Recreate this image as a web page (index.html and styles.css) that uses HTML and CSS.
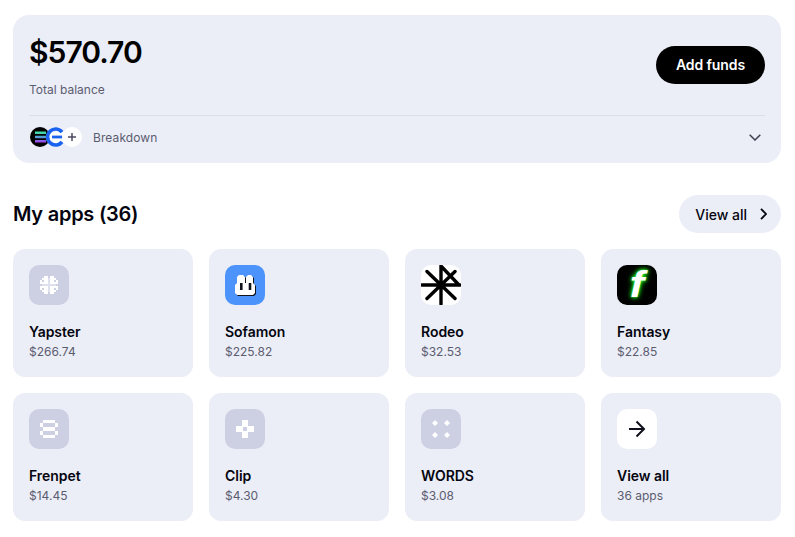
FILE: index.html
```html
<!DOCTYPE html>
<html lang="en">
<head>
  <meta charset="UTF-8" />
  <title>Wallet</title>
  <link rel="stylesheet" href="styles.css">
</head>
<body>

<section class="balance-card">
  <div class="balance-top">
    <div>
      <div class="balance-amount">$570.70</div>
      <div class="balance-label">Total balance</div>
    </div>
    <a class="add-funds">Add funds</a>
  </div>
  <div class="breakdown">
    <div class="coins">
      <svg class="coin" viewBox="0 0 20 20">
        <defs>
          <linearGradient id="sol" x1="0" y1="0" x2="0" y2="1">
            <stop offset="0" stop-color="#3fe6a0"/>
            <stop offset="0.5" stop-color="#4f9fd8"/>
            <stop offset="1" stop-color="#a53fee"/>
          </linearGradient>
        </defs>
        <circle cx="10" cy="10" r="10" fill="#000"/>
        <path d="M5 4.5h11v2.6H5zM5 8.7h11v2.6H5zM5 12.9h11v2.6H5z" fill="url(#sol)"/>
      </svg>
      <svg class="coin" viewBox="0 0 20 20">
        <circle cx="10" cy="10" r="10" fill="#fff"/>
        <path d="M16 5.2A8 8 0 1 0 16 14.8" fill="none" stroke="#1a63f0" stroke-width="3.6"/>
        <rect x="6" y="8.6" width="10" height="2.8" fill="#1a63f0"/>
      </svg>
      <svg class="coin" viewBox="0 0 20 20">
        <circle cx="10" cy="10" r="10" fill="#fff"/>
        <path d="M10 6V14M6 10H14" stroke="#4b4b5e" stroke-width="1.5"/>
      </svg>
    </div>
    <span class="breakdown-label">Breakdown</span>
    <svg class="chevron-down" viewBox="0 0 12 7"><path d="M.7 .7L6 6L11.3 .7" fill="none" stroke="#3f3f52" stroke-width="1.5"/></svg>
  </div>
</section>

<div class="apps-head">
  <h2>My apps (36)</h2>
  <a class="view-all">View all
    <svg viewBox="0 0 7 12"><path d="M1 .8L6 6L1 11.2" fill="none" stroke="#05050f" stroke-width="1.8"/></svg>
  </a>
</div>

<div class="apps-grid">
  <div class="app-card">
    <div class="app-icon">
      <svg viewBox="0 0 40 40" fill="#fff" shape-rendering="crispEdges">
        <path d="M15 11h4v2h-4zM21 11h4v2h-4zM13 13h6v2h-6zM21 13h6v2h-6zM11 15h8v4h-8zM21 15h8v4h-8zM11 21h8v4h-8zM21 21h8v4h-8zM13 25h6v2h-6zM21 25h6v2h-6zM15 27h4v2h-4zM21 27h4v2h-4z"/>
        <path d="M19 13h2v14h-2zM13 19h14v2h-14z" fill-opacity=".35"/>
        <path d="M13 15h2v2h-2zM25 15h2v2h-2zM13 23h2v2h-2zM25 23h2v2h-2z" fill="#cdd0e3"/>
      </svg>
    </div>
    <div class="app-name">Yapster</div>
    <div class="app-value">$266.74</div>
  </div>
  <div class="app-card">
    <div class="app-icon icon-sofamon">
      <svg viewBox="0 0 40 40">
        <path d="M10 20L12 18V12L14 10H18L20 12V18H21V12L23 10H26L28 12V18L30 20V28L28 30H12L10 28Z" fill="#10131c" transform="translate(1 1)"/>
        <path d="M10 20L12 18V12L14 10H18L20 12V18H21V12L23 10H26L28 12V18L30 20V28L28 30H12L10 28Z" fill="#fff"/>
        <path d="M16.3 18V25M25 18V25" stroke="#10131c" stroke-width="2.6"/>
      </svg>
    </div>
    <div class="app-name">Sofamon</div>
    <div class="app-value">$225.82</div>
  </div>
  <div class="app-card">
    <div class="app-icon icon-rodeo">
      <svg viewBox="0 0 40 40" fill="none" stroke="#000" stroke-width="3.4" stroke-linecap="round">
        <path d="M20 1V39M1 20H39M6 6.5L34 33.5M34 6.5L6 33.5M20 1L38 20"/>
      </svg>
    </div>
    <div class="app-name">Rodeo</div>
    <div class="app-value">$32.53</div>
  </div>
  <div class="app-card">
    <div class="app-icon icon-fantasy">
      <span>f</span>
    </div>
    <div class="app-name">Fantasy</div>
    <div class="app-value">$22.85</div>
  </div>
  <div class="app-card">
    <div class="app-icon">
      <svg viewBox="0 0 40 40" fill="#fff" shape-rendering="crispEdges">
        <path d="M14 11h12v3h-12zM11 14h3v4h-3zM26 14h3v4h-3zM14 18h12v4h-12zM11 22h3v4h-3zM26 22h3v4h-3zM14 26h12v3h-12z"/>
      </svg>
    </div>
    <div class="app-name">Frenpet</div>
    <div class="app-value">$14.45</div>
  </div>
  <div class="app-card">
    <div class="app-icon">
      <svg viewBox="0 0 40 40" fill="#fff" shape-rendering="crispEdges">
        <path d="M17 11h6v7h-6zM17 22h6v7h-6zM11 17h7v6h-7zM22 17h7v6h-7z"/>
      </svg>
    </div>
    <div class="app-name">Clip</div>
    <div class="app-value">$4.30</div>
  </div>
  <div class="app-card">
    <div class="app-icon">
      <svg viewBox="0 0 40 40" fill="#fff">
        <path d="M14 11l3 3-3 3-3-3zM26 11l3 3-3 3-3-3zM14 23l3 3-3 3-3-3zM26 23l3 3-3 3-3-3z"/>
      </svg>
    </div>
    <div class="app-name">WORDS</div>
    <div class="app-value">$3.08</div>
  </div>
  <div class="app-card">
    <div class="app-icon icon-arrow">
      <svg viewBox="0 0 40 40" fill="none" stroke="#10101c" stroke-width="2">
        <path d="M12 20H27M19.5 12.5L27 20L19.5 27.5"/>
      </svg>
    </div>
    <div class="app-name">View all</div>
    <div class="app-value">36 apps</div>
  </div>
</div>

</body>
</html>
```

FILE: styles.css
```css
body {
  margin: 0;
  padding: 15px 14px 16px 13px;
  background: #fff;
  color: #05050f;
  font-family: Inter, "Liberation Sans", sans-serif;
}
.balance-card {
  background: #ebeef7;
  border-radius: 16px;
  padding: 16px;
  height: 148px;
  box-sizing: border-box;
}
.balance-top {
  display: flex;
  justify-content: space-between;
  align-items: center;
  padding-bottom: 17px;
  border-bottom: 1px solid #dcdfea;
}
.balance-amount {
  font-size: 30px;
  line-height: 42px;
  font-weight: 600;
  letter-spacing: -1px;
  color: #000;
}
.balance-label {
  margin-top: 9px;
  font-size: 12px;
  line-height: 16px;
  color: #5c5c70;
}
.add-funds {
  background: #000;
  color: #fff;
  border-radius: 19px;
  margin-top: 1px;
  padding: 0 20px;
  height: 38px;
  line-height: 38px;
  font-size: 14px;
  font-weight: 600;
  letter-spacing: -0.1px;
}
.breakdown {
  display: flex;
  align-items: center;
  margin-top: 10px;
  height: 22px;
  font-size: 12px;
  color: #5c5c70;
}
.coins {
  display: flex;
  margin-left: 1px;
  margin-right: 15px;
}
.coin {
  width: 20px;
  height: 20px;
  margin-right: -4px;
}
.breakdown-label {
  letter-spacing: 0.1px;
}
.chevron-down {
  width: 12px;
  height: 7px;
  margin-left: auto;
  margin-right: 4px;
}
.apps-head {
  display: flex;
  justify-content: space-between;
  align-items: center;
  margin-top: 32px;
  height: 38px;
}
.apps-head h2 {
  margin: 0;
  font-size: 20px;
  font-weight: 600;
  letter-spacing: -0.25px;
}
.view-all {
  display: flex;
  align-items: center;
  gap: 13px;
  height: 38px;
  padding: 0 14px 0 16px;
  border-radius: 19px;
  background: #ebeef7;
  font-size: 14px;
  font-weight: 500;
}
.view-all svg {
  width: 7px;
  height: 12px;
}
.apps-grid {
  display: grid;
  grid-template-columns: repeat(4, 1fr);
  gap: 16px;
  margin-top: 16px;
}
.app-card {
  background: #ebeef7;
  border-radius: 12px;
  padding: 16px;
  height: 128px;
  box-sizing: border-box;
}
.app-icon {
  width: 40px;
  height: 40px;
  border-radius: 10px;
  background: #cdd0e3;
  overflow: hidden;
  margin-bottom: 18px;
}
.app-icon svg {
  display: block;
  width: 40px;
  height: 40px;
}
.icon-sofamon {
  background: #4c93fb;
}
.icon-rodeo,
.icon-arrow {
  background: #fff;
}
.icon-fantasy {
  background: #000;
  display: flex;
  align-items: center;
  justify-content: center;
  overflow: visible;
}
.icon-fantasy span {
  font-family: "Liberation Sans", sans-serif;
  font-size: 36px;
  line-height: 40px;
  font-weight: 700;
  font-style: italic;
  color: #fff;
  text-shadow: 0 0 2px #2fff2f, 0 0 4px #1fe01f, 0 0 6px #10c010;
  transform: scaleX(1.2);
}
.app-name {
  font-size: 14px;
  line-height: 18px;
  font-weight: 600;
  letter-spacing: -0.05px;
}
.app-value {
  margin-top: 3px;
  font-size: 12px;
  line-height: 16px;
  color: #5c5c70;
}
```
